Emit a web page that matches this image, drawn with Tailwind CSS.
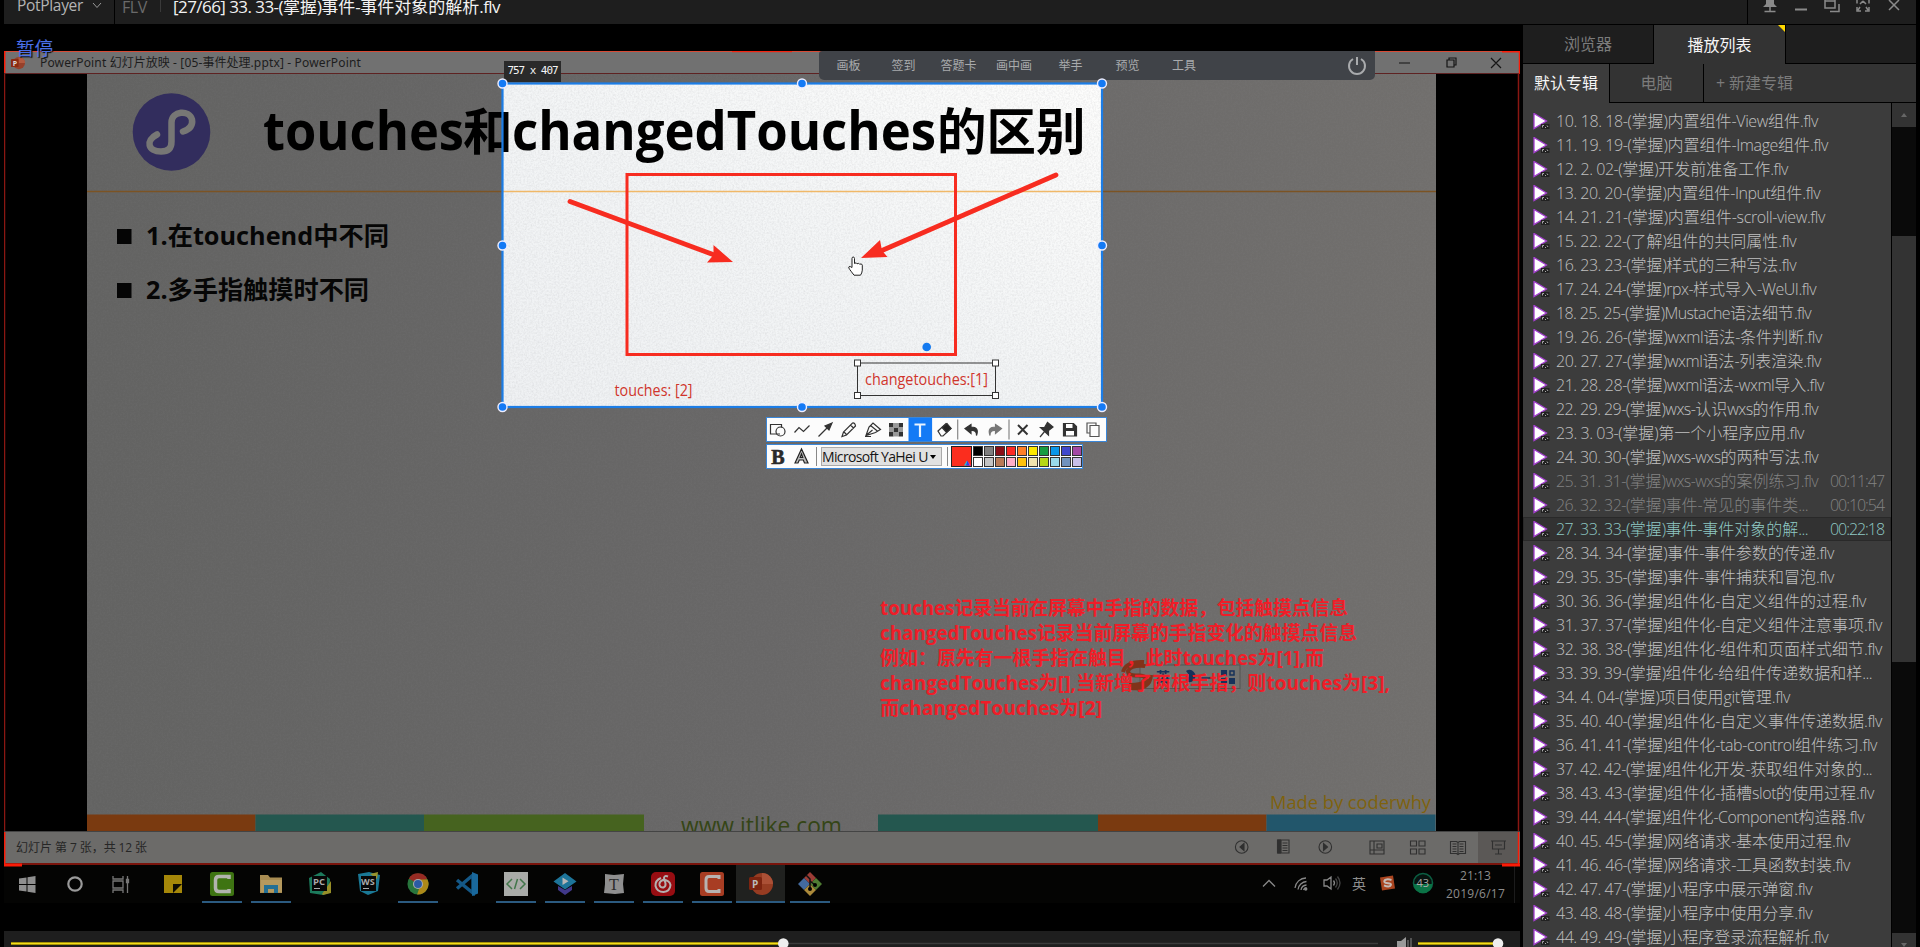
<!DOCTYPE html>
<html lang="zh-CN">
<head>
<meta charset="utf-8">
<title>PotPlayer</title>
<script src="https://cdn.jsdelivr.net/npm/@tailwindcss/browser@4"></script>
</head>
<body class="bg-black">
<div class="relative flex h-[947px] w-[1920px] flex-col overflow-hidden bg-black font-['Open_Sans','Noto_Sans_CJK_SC',sans-serif] whitespace-nowrap">

  <!-- player title bar -->
  <header class="ml-1 mr-1 flex h-6 shrink-0 overflow-hidden bg-[#1e1e1e]">
    <div class="flex w-[111px] items-center border-r border-black pl-[13px] text-[15.5px] text-[#b4b4b4]">
      <span data-w="66" class="-mt-[13px] leading-none">PotPlayer</span>
      <svg class="-mt-[14px] ml-[9px]" width="10" height="7" fill="none" stroke="#999"><path d="M1 1l4 4.500 4-4.500"/></svg>
    </div>
    <div class="flex w-[45px] items-center pl-[7px] text-[16px] text-[#6a6a6a]"><span data-w="25" class="-mt-[11px] leading-none">FLV</span></div>
    <div class="mt-0 h-3 w-px bg-[#3a3a3a]"></div>
    <div class="flex flex-1 items-center pl-[12px] text-[17px] text-[#f2f2f2]"><span data-w="327" class="-mt-[11px] leading-none">[27/66] 33. 33-(掌握)事件-事件对象的解析.flv</span></div>
    <div class="w-[169px] border-l border-black">
      <svg width="168" height="24" fill="none" stroke="#8a8a8a" stroke-width="1.500">
        <path d="M18 0v4l-3 3h14l-3-3v-4z" fill="#8a8a8a" stroke="none"/><path d="M22 7v5M16.500 11.500h11"/>
        <path d="M47 9.500h12" stroke-width="2"/>
        <path d="M77 0v8h10v-8M77 1h10M91 4v7.500h-9"/>
        <path d="M109 3.500v-3.500M109 7v4h4M117 11h4v-4M121 3.500v-3.500M112 4l3-3M118 4l-3-3M112 7l-2 3M118 7l2 3"/>
        <path d="M141 0l10 10M151 0l-10 10"/>
      </svg>
    </div>
  </header>

  <main class="flex h-[923px]">
    <!-- video column -->
    <section class="ml-1 flex w-[1516px] flex-col">
      <div class="relative mt-[27px] flex h-[852px] flex-col">
        <!-- recorded window: title bar -->
        <div class="flex h-[23px] shrink-0 items-center border-b border-b-[#5e2222] border-t border-t-[#d84a35] bg-[#717171] pl-[7px] text-[12px] text-[#1d1d1d]">
          <svg width="14" height="14" viewBox="0 0 24 24"><circle cx="13.500" cy="12" r="10.500" fill="#97402a"/><path d="M13 1.500A10.500 10.500 0 0 1 24 12H13z" fill="#b35a40"/><rect y="5" width="13" height="14" rx="1.500" fill="#8c2a12"/><text x="3" y="16.500" font-size="12" font-weight="700" fill="#ddd">P</text></svg>
          <span data-w="321" class="ml-[15px] font-['Noto_Sans','Noto_Sans_CJK_SC',sans-serif] text-[12px]">PowerPoint 幻灯片放映 - [05-事件处理.pptx] - PowerPoint</span>
          <svg class="ml-auto" width="126" height="22" fill="none" stroke="#151515" stroke-width="1.200"><path d="M5 11h11M53 8h7v7h-7zM55 8v-2h7v7h-2M97 6l10 10M107 6l-10 10"/></svg>
        </div>

        <!-- slide canvas -->
        <svg class="block shrink-0" width="1516" height="758" viewBox="4 74 1516 758" font-family="'Open Sans','Noto Sans CJK SC',sans-serif">
          <defs>
            <linearGradient id="dim" x1="0" y1="0" x2="1" y2="0"><stop offset="0" stop-color="#636362"/><stop offset=".5" stop-color="#686767"/><stop offset="1" stop-color="#716f6d"/></linearGradient>
            <linearGradient id="lit" x1="0" y1="1" x2="1" y2="0"><stop offset="0" stop-color="#eff1f3"/><stop offset=".5" stop-color="#f3f5f6"/><stop offset="1" stop-color="#fdfdfc"/></linearGradient>
            <filter id="grain" x="0" y="0" width="100%" height="100%"><feTurbulence type="fractalNoise" baseFrequency=".55" numOctaves="3" seed="4"/><feColorMatrix values="0 0 0 0 .35  0 0 0 0 .35  0 0 0 0 .37  .7 0 0 0 -.25"/></filter>
          </defs>
          <rect x="4" y="74" width="1516" height="758" fill="#000"/>
          <rect x="87" y="74" width="1349" height="758" fill="url(#dim)"/>
          <rect x="87" y="74" width="1349" height="758" filter="url(#grain)" opacity=".2"/>
          <rect x="503" y="83" width="599" height="324" fill="url(#lit)"/>
          <rect x="503" y="83" width="599" height="324" filter="url(#grain)" opacity=".5"/>
          <path d="M87 191.500H1436" stroke="#7b5324" stroke-width="1.500" stroke-dasharray="416 599 400"/>
          <path d="M503 191.500H1102" stroke="#f0b868" stroke-width="1.500"/>

          <circle cx="171.500" cy="132" r="38.800" fill="#322d5d"/>
          <path d="M157 134.500c-12 6-9 17 4 17 8 0 10.500-4 10.500-10v-19c0-12 18-13 20.500-3 1 6-3 10-9 12" fill="none" stroke="#777775" stroke-width="6.500" stroke-linecap="round"/>

          <text font-weight="700" font-size="49.500" y="149.500" fill="#000"><tspan x="263" font-size="53" textLength="201" lengthAdjust="spacingAndGlyphs">touches</tspan><tspan x="463">和</tspan><tspan x="512" font-size="53" textLength="424" lengthAdjust="spacingAndGlyphs">changedTouches</tspan><tspan x="937">的区别</tspan></text>
          <path d="M117 229h14.500v15h-14.500zM117 283h14.500v15h-14.500z" fill="#050505"/>
          <text x="146" y="245" font-weight="700" font-size="25" fill="#060606" textLength="243" lengthAdjust="spacingAndGlyphs">1.在touchend中不同</text>
          <text x="146" y="299" font-weight="700" font-size="25" fill="#060606" textLength="223" lengthAdjust="spacingAndGlyphs">2.多手指触摸时不同</text>

          <!-- annotations -->
          <g fill="none" stroke="#f72c20">
            <rect x="627" y="174.500" width="328.500" height="180" stroke-width="3"/>
            <path d="M570 201.500L713 254.500M1056 175L882 250.500" stroke-width="4.800" stroke-linecap="round"/>
          </g>
          <path d="M713.500 245L733 262 707 262.500 713.500 255zM880 240L861 258 887.500 257 882 250.500z" fill="#f72c20"/>
          <circle cx="926.700" cy="347" r="4.300" fill="#147af0"/>
          <text x="614.500" y="396" font-size="15.500" fill="#d0352c" textLength="78" lengthAdjust="spacingAndGlyphs">touches: [2]</text>
          <rect x="857.500" y="363" width="138" height="32.500" fill="none" stroke="#333"/>
          <g fill="#fff" stroke="#333"><rect x="854.500" y="360" width="6" height="6"/><rect x="992.500" y="360" width="6" height="6"/><rect x="854.500" y="392.500" width="6" height="6"/><rect x="992.500" y="392.500" width="6" height="6"/></g>
          <text x="865" y="385" font-size="16" fill="#d0352c" textLength="123" lengthAdjust="spacingAndGlyphs">changetouches:[1]</text>
          <path d="M852 267v-8.500q0-1.500 1.200-1.500t1.300 1.500v5q2-1.500 2.500.3 2-1.200 2.500.4 2.500-1 2.800 1v5q-.3 3-1.800 5h-6.500l-3-4q-3.200-4-2-4.500 1.200-.6 3 .8z" fill="#fff" stroke="#222"/>

          <!-- input method strip under the note -->
          <rect x="1140" y="665" width="100" height="23.500" fill="#72726f" stroke="#555552"/>
          <path d="M1145 666q-15-1-17 5 0 5 9 4.500t9 4.500q-2 5-17 5M1123 672q3-11 21-10M1151 675q-1 15-20 13" fill="none" stroke="#81331a" stroke-width="4"/>
          <text x="1156" y="682" font-size="14" font-weight="700" fill="#17325a">英</text>
          <path d="M1186 671a6 6 0 1 1 0 10q5-5 0-10zM1221 670h6v6h-6zM1221 678h6v6h-6zM1229 678h6v6h-6z" fill="#17325a"/><path d="M1230 671h4v4h-4zM1200 678h14" fill="none" stroke="#17325a" stroke-width="1.500"/>
          <g font-weight="700" font-size="18.800" fill="#f01d28">
            <text x="880" y="614.500" textLength="468" lengthAdjust="spacingAndGlyphs">touches记录当前在屏幕中手指的数据，包括触摸点信息</text>
            <text x="880" y="639.500" textLength="477" lengthAdjust="spacingAndGlyphs">changedTouches记录当前屏幕的手指变化的触摸点信息</text>
            <text x="880" y="664.500" textLength="444" lengthAdjust="spacingAndGlyphs">例如：原先有一根手指在触目，此时touches为[1],而</text>
            <text x="880" y="689.500" textLength="510" lengthAdjust="spacingAndGlyphs">changedTouches为[],当新增了两根手指，则touches为[3],</text>
            <text x="880" y="714.500" textLength="222" lengthAdjust="spacingAndGlyphs">而changedTouches为[2]</text>
          </g>

          <!-- slide footer -->
          <path d="M87 814.500h168.500v18h-168.500zM1098 814.500h168.500v18h-168.500z" fill="#7a3a10"/>
          <path d="M255.500 814.500h168.500v18h-168.500zM878 814.500h220v18h-220z" fill="#24574f"/>
          <rect x="424" y="814.500" width="220" height="18" fill="#46631f"/>
          <rect x="1266.500" y="814.500" width="169" height="18" fill="#22566b"/>
          <text x="681" y="834" font-size="23" fill="#354516" textLength="161" lengthAdjust="spacingAndGlyphs">www.itlike.com</text>
          <text x="1270" y="808.500" font-size="19" fill="#7f620e" textLength="161" lengthAdjust="spacingAndGlyphs">Made by coderwhy</text>
          <path d="M4.500 74V832M1518.500 74V832" stroke="#8a1712" stroke-width="1.500"/>
          <path d="M4 831.500H1520" stroke="#444"/>
        </svg>

        <!-- slideshow status bar -->
        <div class="flex h-[33px] shrink-0 items-center border-b-2 border-[#7a140c] bg-[#6c6b69] pl-3 text-[12px] text-[#262626]">
          <span data-w="131" class="mt-px">幻灯片 第 7 张，共 12 张</span>
          <svg class="ml-auto" width="290" height="31" viewBox="1230 832 290 31" fill="none" stroke="#303030" stroke-width="1.100">
            <rect x="1478" y="832" width="40" height="31" fill="#5b5856" stroke="none"/>
            <circle cx="1241.700" cy="847" r="6.300"/><path d="M1244 843.500v7l-4-3.500z" fill="#303030"/>
            <circle cx="1325.300" cy="847" r="6.300"/><path d="M1323.500 843.500v7l4-3.500z" fill="#303030"/>
            <path d="M1278 840h11v13h-11zM1281 840v13M1282.500 843h5M1282.500 845.500h5M1282.500 848h5M1282.500 850.500h5"/><path d="M1277.500 840h3v13h-3z" fill="#303030"/>
            <path d="M1370 841h14v13h-14zM1374 841v13M1370 850h14M1377 844h5v4h-5z"/>
            <path d="M1410.500 841h6v5h-6zM1419 841h6v5h-6zM1410.500 849h6v5h-6zM1419 849h6v5h-6z"/>
            <path d="M1450.500 841.500h6l1.500 1 1.500-1h6v12h-6l-1.500 1-1.500-1h-6zM1458 842v12M1452.500 844h4M1452.500 846.500h4M1452.500 849h4M1452.500 851.500h4M1459.500 844h4M1459.500 846.500h4M1459.500 849h4M1459.500 851.500h4"/>
            <path d="M1491 841h15M1492.500 841v8h12v-8M1495 845h7M1498.500 849v5M1495 854h7"/>
          </svg>
        </div>

        <!-- Windows taskbar -->
        <div class="flex h-[38px] items-stretch bg-[#040403]">
          <div class="flex w-[47px] items-center justify-center"><svg width="17" height="17" fill="#8f8f8f"><path d="M0 2.500l7.500-1v6.500h-7.500zM8.500 1.300l8-1.300v8h-8zM0 9h7.500v6.500l-7.500-1zM8.500 9h8v8l-8-1.200z"/></svg></div>
          <div class="flex w-[47px] items-center justify-center"><svg width="18" height="18" fill="none" stroke="#9a9a9a" stroke-width="2.200"><circle cx="9" cy="9" r="6.700"/></svg></div>
          <div class="flex w-[50px] items-center justify-center pr-1"><svg width="18" height="17" fill="none" stroke="#777" stroke-width="1.300"><path d="M1 0v3h10v-3M1 17v-3h10v3M1 5h10v7H1zM15.500 0v3M15.500 7v10"/><path d="M14.500 3.500h2v3h-2z" fill="#777"/></svg></div>
          <div class="flex w-[49px] items-center justify-center"><svg width="18" height="18"><path d="M0 0h18v18H0z" fill="#a58709"/><path d="M9 9h9l-9 9z" fill="#0d0b03"/></svg></div>
          <div class="relative flex w-[49px] items-center justify-center"><svg width="24" height="24"><rect width="24" height="24" rx="2.500" fill="#3e7412"/><path d="M19 7V4.500H9Q5.500 4.500 5.500 8v8q0 3.500 3.500 3.500h10V17" fill="none" stroke="#b2b4ae" stroke-width="3.500"/></svg><i class="absolute bottom-0 h-0.5 w-10 bg-[#2b5a80]"></i></div>
          <div class="relative flex w-[49px] items-center justify-center"><svg width="24" height="20"><path d="M1 1h8l2 2.500h12V19H1z" fill="#a88c52"/><path d="M2 6h21v12H2z" fill="#b5995e"/><path d="M5 19v-8h14v8h-4v-4H9v4z" fill="#236f94"/></svg><i class="absolute bottom-0 h-0.5 w-10 bg-[#2b5a80]"></i></div>
          <div class="flex w-[49px] items-center justify-center"><svg width="24" height="24"><path d="M1 6L13 0l9 7-1 14-6 2-13-2z" fill="#1c7a5c"/><path d="M14 22l9-13 0 12-8 2z" fill="#988f27"/><rect x="4" y="4" width="15" height="15" fill="#070707"/><text x="5" y="12.500" font-size="9.500" font-weight="700" fill="#aaa">PC</text><path d="M6 16.500h6" stroke="#aaa"/></svg></div>
          <div class="flex w-[49px] items-center justify-center"><svg width="24" height="24"><path d="M1 2L12 0l11 3-2 16-10 4-8-4z" fill="#1a7895"/><path d="M13 2l8-2-1 7z" fill="#97922c"/><rect x="4" y="4" width="15" height="15" fill="#070707"/><text x="4" y="12.500" font-size="9" font-weight="700" fill="#aaa">WS</text><path d="M6 16.500h6" stroke="#aaa"/></svg></div>
          <div class="relative flex w-[49px] items-center justify-center"><svg width="22" height="22" viewBox="0 0 24 24"><circle cx="12" cy="12" r="11.500" fill="#28753c"/><path d="M2 6A11.500 11.500 0 0 1 22 6L12 12z" fill="#972b23"/><path d="M22 6.500A11.500 11.500 0 0 1 11 23.500L15 12l-3-5h10z" fill="#ac8919"/><circle cx="12" cy="12" r="5.500" fill="#aaa"/><circle cx="12" cy="12" r="4.300" fill="#2b5ba3"/></svg><i class="absolute bottom-0 h-0.5 w-10 bg-[#2b5a80]"></i></div>
          <div class="flex w-[49px] items-center justify-center"><svg width="24" height="24" fill="none"><path d="M18 3v18L2 8M18 3L2 16.500" stroke="#145887" stroke-width="3.500"/><path d="M17 0l6 2.500v19L17 24z" fill="#19689c"/></svg></div>
          <div class="relative flex w-[49px] items-center justify-center"><svg width="24" height="24" fill="none"><rect width="24" height="24" fill="#a9aba8"/><path d="M8 7l-5 5 5 5M16 7l5 5-5 5M13.500 7l-3 10" stroke="#41764a" stroke-width="1.500"/></svg><i class="absolute bottom-0 h-0.5 w-10 bg-[#2b5a80]"></i></div>
          <div class="relative flex w-[49px] items-center justify-center"><svg width="24" height="22"><path d="M5 13l7 4 7-4v4l-7 5-7-5z" fill="#40388a"/><path d="M12 0l11.500 8.500L12 16.500.5 8.500z" fill="#1d7499"/><path d="M9.500 4.500v7.500l6-3.700z" fill="#b5b5b5"/></svg><i class="absolute bottom-0 h-0.5 w-10 bg-[#2b5a80]"></i></div>
          <div class="relative flex w-[49px] items-center justify-center"><svg width="22" height="22"><path d="M2 1l9 1 10-1-1 10 1 9-9 1-11-1 1-9z" fill="#8f8f8f"/><text x="6" y="16.500" font-family="Liberation Serif" font-size="16" fill="#2a2a2a">T</text></svg><i class="absolute bottom-0 h-0.5 w-10 bg-[#2b5a80]"></i></div>
          <div class="relative flex w-[49px] items-center justify-center"><svg width="24" height="24" fill="none" stroke="#b5b0b0" stroke-width="2"><rect width="24" height="24" rx="5" fill="#970d12" stroke="none"/><path d="M10 6Q4 8.500 4.500 14q1.500 6 8 6 6.500-.5 7-7-1-5-7.500-5Q8 9.500 8.500 13q1 3 4 2.500 2.500-1 2-4L13 6q.5-3 4-1.500"/></svg><i class="absolute bottom-0 h-0.5 w-10 bg-[#2b5a80]"></i></div>
          <div class="relative flex w-[49px] items-center justify-center"><svg width="24" height="24"><rect width="24" height="24" rx="2.500" fill="#a83d23"/><path d="M19 7V4.500H9Q6 4.500 6 8v8q0 3.500 3 3.500h10V17" fill="none" stroke="#b8b3b1" stroke-width="3"/></svg><i class="absolute bottom-0 h-0.5 w-10 bg-[#2b5a80]"></i></div>
          <div class="relative flex w-[49px] items-center justify-center bg-[#20211f]"><svg width="24" height="24" viewBox="0 0 24 24"><circle cx="13" cy="12" r="11" fill="#963c22"/><path d="M13 1A11 11 0 0 1 24 12H13z" fill="#ab5036"/><rect y="5" width="13" height="13" rx="1.500" fill="#7c2410"/><text x="3" y="15.500" font-size="10" font-weight="700" fill="#bbb">P</text></svg><i class="absolute inset-x-0 bottom-0 h-0.5 bg-[#2b5a80]"></i></div>
          <div class="relative flex w-[49px] items-center justify-center"><svg width="24" height="24"><path d="M12 0l6 6-6 6-6-6z" fill="#9c3c35"/><path d="M6 6l6 6-6 6-6-6z" fill="#436a9e"/><path d="M18 6l6 6-6 6-6-6z" fill="#4f7c33"/><path d="M12 12l6 6-6 6-6-6z" fill="#ab8a3a"/><path d="M8 3l4 4v10M12 9l5 4" stroke="#111" stroke-width="1.500" fill="none"/><circle cx="12" cy="17" r="2"/><circle cx="17" cy="13" r="2"/></svg><i class="absolute bottom-0 h-0.5 w-10 bg-[#2b5a80]"></i></div>
          <!-- tray -->
          <svg class="ml-auto" width="180" height="38" viewBox="1258 865 180 38" fill="none" stroke="#888" stroke-width="1.300">
            <path d="M1263 886.500l6-6 6 6"/>
            <path d="M1295 888a11 11 0 0 1 11-10M1298 889.500a9 9 0 0 1 8.500-8M1301 890a6 6 0 0 1 5.500-5M1303.500 890a3 3 0 0 1 3-2"/><circle cx="1305.800" cy="889" r="1" fill="#888"/>
            <path d="M1324 880h3l4-3v12l-4-3h-3zM1333.500 880.500q2 2.500 0 5"/><path d="M1335.500 878.500q3.500 4.500 0 9M1337.500 876.500q5 6.500 0 13" stroke="#444"/>
            <text x="1352" y="888.500" font-size="14" fill="#8e8e8e" stroke="none">英</text>
            <path d="M1380 877.500l13-2 2 13-13 2z" fill="#a9441f" stroke="none"/><path d="M1391.500 880c-5-1.500-8 0-7 2s7 .5 6.500 2.800-4 2-7 .6" stroke="#c5bab5" stroke-width="2"/>
            <circle cx="1423" cy="883" r="9.500" fill="#07130f" stroke="#0b5e42" stroke-width="1.600"/><path d="M1413.700 884h18.600a9.300 9.300 0 0 1-18.600 0z" fill="#0b7346" stroke="none"/><text x="1416.500" y="887" font-size="11" fill="#aaa" stroke="none">43</text>
          </svg>
          <div class="flex w-[76px] flex-col items-center justify-center gap-[7px] pr-[1px] text-[12px] leading-[11px] text-[#8d8d8d]"><span data-w="31">21:13</span><span data-w="59">2019/6/17</span></div>
          <div class="mr-[5px] w-px bg-[#1c1c1c]"></div>
        </div>

        <!-- recording frame corners -->
        <svg class="absolute left-0 top-0" width="1516" height="816" fill="none" stroke="#fb1c08"><path d="M.7 0v22M1498 .7h17.500v22" stroke-width="1.500"/><path d="M728 .7h60"/><path d="M.7 781v34M1514.500 781v34" stroke-width="1.500"/><path d="M0 814h18M1498 814h18" stroke-width="3"/></svg>

        <!-- playback state -->
        <div class="absolute left-[12px] top-[-14px] text-[18.500px] leading-[22px] text-[#4a6fe8] [text-shadow:1px_1px_1px_#000]">暂停</div>

        <!-- classroom toolbar -->
        <div class="absolute left-[815px] top-0 flex h-[29px] w-[556px] items-center rounded-b-[5px] rounded-tl-[3px] bg-[#404348] text-[12px] text-[#a9abad]">
          <span class="ml-[2px] w-[55px] text-center">画板</span><span class="w-[55px] text-center">签到</span><span class="w-[55px] text-center">答题卡</span><span class="w-[56px] text-center">画中画</span><span class="w-[57px] text-center">举手</span><span class="w-[57px] text-center">预览</span><span class="w-[56px] text-center">工具</span>
          <svg class="ml-auto mr-[8px]" width="20" height="20" fill="none" stroke="#a9abad" stroke-width="2"><path d="M10 1v8M6 3a8 8 0 1 0 8 0"/></svg>
        </div>

        <!-- capture selection -->
        <div class="absolute left-[500px] top-[10px] flex h-[21px] w-[57px] items-center justify-center bg-[#2a2a2a] font-['DejaVu_Sans_Mono',monospace] text-[11px] text-[#f4f4f4]"><span data-w="50">757 x 407</span></div>
        <svg class="absolute left-[490px] top-[20px]" width="620" height="350" viewBox="494 71 620 350">
          <rect x="502.500" y="83.500" width="599.500" height="323.500" fill="none" stroke="#1c7de6" stroke-width="2.200"/>
          <g fill="#147af5" stroke="#eef" stroke-width="1.400"><circle cx="502.500" cy="83.500" r="4.500"/><circle cx="802" cy="83.500" r="4.500"/><circle cx="1102" cy="83.500" r="4.500"/><circle cx="502.500" cy="245.500" r="4.500"/><circle cx="1102" cy="245.500" r="4.500"/><circle cx="502.500" cy="407" r="4.500"/><circle cx="802" cy="407" r="4.500"/><circle cx="1102" cy="407" r="4.500"/></g>
        </svg>

        <!-- capture tool rows -->
        <div class="absolute left-[762px] top-[366px] flex h-[25px] w-[341px] border border-[#3a86d8] bg-[#fcfcfc]">
          <svg width="339" height="23" viewBox="767 418 339 23" fill="none" stroke="#333" stroke-width="1.200">
            <rect x="908.500" y="418" width="23.600" height="23" fill="#147af5" stroke="none"/>
            <path d="M780 434h-9.500v-9.500h11v3"/><circle cx="780.500" cy="431.500" r="4.500"/>
            <path d="M794.500 432.500l4.500-5 4.500 4 6-6"/>
            <path d="M818.500 436.500l9-9"/><path d="M832 423l-7 3 4 4z" fill="#333"/>
            <path d="M842 436.500l1.500-4.500 9-9q2.500-.5 3 3l-9 9zM850.500 425l3 3M844 432l2.500 2.500"/>
            <path d="M866 435.500l3-8.500 4-4 7.500 6.500-5 3zM866 435.500l6.500-5.500M865 436.500h6M870.500 425.500l7.500 6"/>
            <path d="M889 423h4.500v4.500h-4.500zM898.500 423h4.500v4.500h-4.500zM893.500 427.500h5v4.500h-5zM889 432h4.500v4.500h-4.500zM898.500 432h4.500v4.500h-4.500z" fill="#333" stroke="none"/><path d="M893.500 423h5v4.500h-5zM889 427.500h4.500v4.500h-4.500zM898.500 427.500h4.500v4.500h-4.500zM893.500 432h5v4.500h-5z" fill="#999" stroke="none"/>
            <path d="M914.500 424.500h11M920 424.500v12.500" stroke="#e9f3ff" stroke-width="2.200"/>
            <path d="M938 431l8-7.500 5 5-8 7.500h-2z"/><path d="M942 427.500l5-4 4 5-4.500 4z" fill="#222"/>
            <path d="M957.700 419.500v20M1009 419.500v20" stroke="#888"/>
            <path d="M971 424.500l-6 4 6 5v-3q6-.5 5.500 5 3-8.500-5.500-8.500z" fill="#333" stroke="#333"/>
            <path d="M995.500 424.500l6 4-6 5v-3q-6-.5-5.500 5-3-8.500 5.500-8.500z" fill="#777" stroke="#777"/>
            <path d="M1018 425l9.500 9.500M1027.500 425l-9.500 9.500" stroke-width="2"/>
            <path d="M1040 437l5-6"/><path d="M1040.500 427.500l4 0 3-5 5.500 4.500-4.500 3.500 0 4.500z" fill="#333"/>
            <path d="M1063.500 423.500h10l3 3v9.500h-13z" fill="#333"/><path d="M1066 424h6.500v4h-6.500zM1066 431h8v4.500h-8z" fill="#fff" stroke="none"/>
            <path d="M1090 433h-3v-10h9v2M1090 425.500h9v11h-9z" stroke="#555"/>
          </svg>
        </div>
        <div class="absolute left-[762px] top-[393px] flex h-[25px] w-[317px] border border-[#3a86d8] bg-[#fcfcfc]">
          <b class="flex w-[22px] items-center justify-center font-['Liberation_Serif',serif] text-[20px] text-[#2a2a2a] [-webkit-text-stroke:0.6px_#2a2a2a]">B</b>
          <svg width="27" height="23"><path d="M6 18l6.500-14L19 18h-3.500l-1.200-3h-4L9 18zM11.200 12.500h2.500l-1.200-3.500z" fill="#bbb" stroke="#222" stroke-width="1.200"/></svg>
          <i class="my-0.5 w-px bg-[#888]"></i>
          <div class="my-[2px] ml-[4px] flex w-[121px] items-center justify-between border border-[#aaa] bg-[#e1e1e1] pr-1 text-[14px] text-[#151515]"><span data-w="109" class="w-[106px] overflow-hidden">Microsoft YaHei UI</span><svg width="7" height="4" class="shrink-0"><path d="M0 0h6L3 4z"/></svg></div>
          <i class="my-0.5 ml-[5px] mr-[3px] w-px bg-[#888]"></i>
          <svg width="21" height="21" class="mt-[1px]"><rect x=".5" y=".5" width="20" height="20" fill="#fb2d1e" stroke="#222"/><path d="M13 19.500l3-5v5z" fill="#22c4d8"/><path d="M16 14.500l4 5h-4z" fill="#d633d0"/><path d="M15 19.500l1.500-5 2 5z" fill="#2c46e0"/></svg>
          <div id="swatches" class="ml-[1px] mt-[1px] grid h-[21px] grid-cols-10 gap-x-[1px] gap-y-[1px]"></div>
        </div>
      </div>

      <!-- seek bar -->
      <div class="mt-[28px] h-4 bg-[#1e1e1e]">
        <svg width="1516" height="16" viewBox="4 931 1516 16"><path d="M783 943.500H1378" stroke="#3b3b3b" stroke-width="1.500"/><path d="M11 943.500H783M1418 943.500H1498" stroke="#8c7c00" stroke-width="3"/><path d="M11 943.500H783M1418 943.500H1498" stroke="#f3dd1c" stroke-width="1.400"/><circle cx="783.300" cy="943.500" r="5.300" fill="#eee"/><circle cx="1498" cy="943.500" r="5.300" fill="#eee"/><path d="M1397 941h4l5-4v13h-9z" fill="#999"/><path d="M1408 940v7M1411 938v9" stroke="#888"/></svg>
      </div>
    </section>

    <!-- playlist -->
    <aside class="ml-[3px] flex w-[393px] flex-col">
      <nav class="mt-px flex h-[38px] shrink-0 bg-[#1e1e1e] text-[16px]">
        <div class="flex w-[131px] items-center justify-center border-r border-black text-[#7b7b7b]">浏览器</div>
        <div class="relative flex h-[39px] w-[132px] items-center justify-center border-r border-black bg-[#333] text-[#f5f5f5]">播放列表<svg class="absolute right-0 top-0" width="7" height="7"><path d="M0 0h7v7z" fill="#ffd800"/></svg></div>
      </nav>
      <nav class="mt-px flex h-[39px] shrink-0 bg-[#333] text-[16px]">
        <div class="flex w-[87px] items-center justify-center border-r border-black bg-[#3c3c3c] pb-px text-[#f5f5f5]">默认专辑</div>
        <div class="flex w-[94px] items-center justify-center border-b border-r border-black text-[#7b7b7b]">电脑</div>
        <div class="flex flex-1 items-center border-b border-black pl-[12px] text-[#7b7b7b]"><span data-w="77">+ 新建专辑</span></div>
      </nav>
      <div class="flex h-[844px] bg-[#3c3c3c]">
        <ul id="list" class="w-[368px] pt-[6px] text-[16px] font-light text-[#c0c0c0]"></ul>
        <div class="flex w-[25px] flex-col border-l border-black bg-[#0a0a0a]">
          <div class="flex h-6 items-center justify-center bg-[#333]"><svg width="6" height="4"><path d="M0 4l3-4 3 4z" fill="#666"/></svg></div>
          <div class="mt-[109px] h-[426px] bg-[#333]"></div>
          <div class="mt-auto flex h-[14px] items-end justify-center bg-[#333]"><svg width="6" height="4"><path d="M0 0h6L3 4z" fill="#666"/></svg></div>
        </div>
      </div>
    </aside>
  </main>
</div>

<template id="flv"><svg width="17" height="17" class="shrink-0"><path d="M1 .5L13.500 8 1 15.500z" fill="#fff" stroke="#a43fd0" stroke-width="1.300"/><rect x="8" y="11" width="8.500" height="5" fill="#222"/><path d="M9.500 14.500v-2h1.500M12 14.500h1M14 12.500l1 1.500" stroke="#aaa" fill="none"/></svg></template>
<script>
const rows = [
["10. 18. 18-(掌握)内置组件-View组件.flv",262],["11. 19. 19-(掌握)内置组件-Image组件.flv",272],["12. 2. 02-(掌握)开发前准备工作.flv",232],["13. 20. 20-(掌握)内置组件-Input组件.flv",264],["14. 21. 21-(掌握)内置组件-scroll-view.flv",269],["15. 22. 22-(了解)组件的共同属性.flv",240],["16. 23. 23-(掌握)样式的三种写法.flv",240],["17. 24. 24-(掌握)rpx-样式导入-WeUI.flv",260],["18. 25. 25-(掌握)Mustache语法细节.flv",255],["19. 26. 26-(掌握)wxml语法-条件判断.flv",266],["20. 27. 27-(掌握)wxml语法-列表渲染.flv",265],["21. 28. 28-(掌握)wxml语法-wxml导入.flv",268],["22. 29. 29-(掌握)wxs-认识wxs的作用.flv",262],["23. 3. 03-(掌握)第一个小程序应用.flv",248],["24. 30. 30-(掌握)wxs-wxs的两种写法.flv",262],["25. 31. 31-(掌握)wxs-wxs的案例练习.flv",262,"00:11:47"],["26. 32. 32-(掌握)事件-常见的事件类...",252,"00:10:54"],["27. 33. 33-(掌握)事件-事件对象的解...",252,"00:22:18"],["28. 34. 34-(掌握)事件-事件参数的传递.flv",278],["29. 35. 35-(掌握)事件-事件捕获和冒泡.flv",278],["30. 36. 36-(掌握)组件化-自定义组件的过程.flv",310],["31. 37. 37-(掌握)组件化-自定义组件注意事项.flv",326],["32. 38. 38-(掌握)组件化-组件和页面样式细节.flv",326],["33. 39. 39-(掌握)组件化-给组件传递数据和样...",316],["34. 4. 04-(掌握)项目使用git管理.flv",234],["35. 40. 40-(掌握)组件化-自定义事件传递数据.flv",326],["36. 41. 41-(掌握)组件化-tab-control组件练习.flv",321],["37. 42. 42-(掌握)组件化开发-获取组件对象的...",316],["38. 43. 43-(掌握)组件化-插槽slot的使用过程.flv",318],["39. 44. 44-(掌握)组件化-Component构造器.flv",308],["40. 45. 45-(掌握)网络请求-基本使用过程.flv",294],["41. 46. 46-(掌握)网络请求-工具函数封装.flv",294],["42. 47. 47-(掌握)小程序中展示弹窗.flv",256],["43. 48. 48-(掌握)小程序中使用分享.flv",256],["44. 49. 49-(掌握)小程序登录流程解析.flv",272]];
const list = document.getElementById('list'), icon = document.getElementById('flv').innerHTML;
list.innerHTML = rows.map(([t,w,d]) => {
  const tone = !d ? '' : d === '00:22:18' ? 'bg-[#323232] outline outline-1 -outline-offset-1 outline-[#292929] text-[#8fc9c4]' : 'text-[#828282]';
  return `<li class="flex h-6 items-center pl-[10px] pr-[7px] leading-6 ${tone}">${icon}<span class="ml-[6px]" data-w="${w}">${t}</span>${d ? `<span class="ml-auto" data-w="54">${d}</span>` : ''}</li>`;
}).join('');
document.getElementById('swatches').innerHTML = ['#000','#7f7f7f','#8a0f17','#fb2a25','#ff7f27','#fde800','#189c42','#0a96e8','#3f48cc','#a349a4','#fff','#c3c3c3','#b97a57','#ffaec9','#ffc20e','#efe4b0','#b5d816','#99d9ea','#7092be','#c8bfe7'].map(c => `<i class="block h-[10px] w-[10px] border border-[#333]" style="background:${c}"></i>`).join('');

// Tighten or loosen the Latin runs so that each label takes its nominal width.
const labels = [...document.querySelectorAll('[data-w]')].map(el => {
  const parts = el.textContent.split(/([\x20-\x7e]+)/).filter(Boolean), runs = [];
  let n = 0;
  el.innerHTML = '';
  for (const p of parts) {
    const s = document.createElement('span');
    s.textContent = p;
    if (/^[\x20-\x7e]/.test(p)) { n += p.length; runs.push(s); }
    el.append(s);
  }
  return { el, runs, n };
});
function fit() {
  for (const { runs } of labels) runs.forEach(s => s.style.letterSpacing = '0px');
  const gaps = labels.map(({ el, n }) => {
    let w = 0;
    for (const s of el.children) w += s.getBoundingClientRect().width;
    return (el.dataset.w - w) / n;
  });
  labels.forEach(({ runs }, i) => runs.forEach(s => s.style.letterSpacing = gaps[i].toFixed(3) + 'px'));
}
fit();
addEventListener('load', fit);
document.fonts.ready.then(fit);
new MutationObserver(fit).observe(document.head, { childList: true });
setTimeout(fit, 100);
</script>
</body>
</html>
